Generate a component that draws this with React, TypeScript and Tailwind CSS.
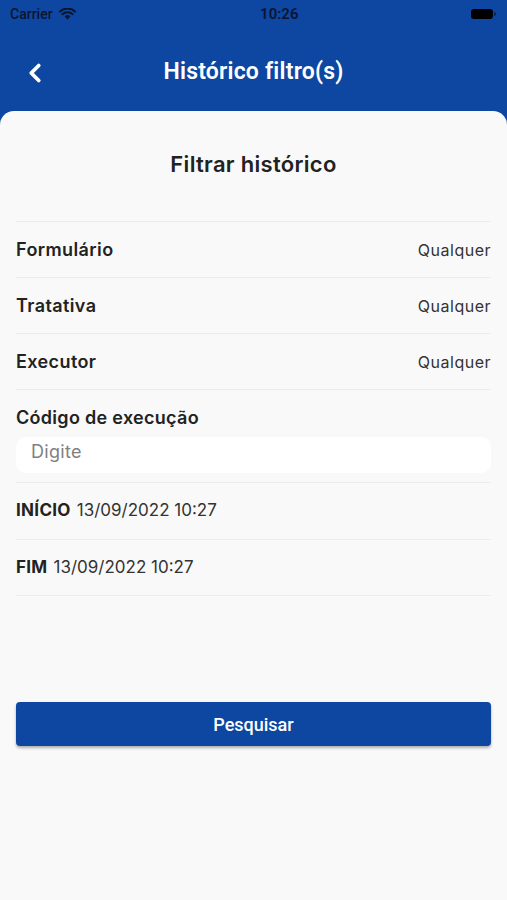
import { ChevronLeft } from "lucide-react";

const rows = ["Formulário", "Tratativa", "Executor"];

const App = () => {
  return (
    <div className="w-[507px] h-[900px] bg-[#0d47a1] flex flex-col font-['Inter',sans-serif] overflow-hidden">
      {/* Status bar */}
      <div className="h-[28px] flex items-center justify-between px-[10px] text-[#0b1430]">
        <div className="flex items-center gap-[6px]">
          <span className="text-[14px] font-medium font-['Roboto',sans-serif]">Carrier</span>
          <svg width="17" height="12" viewBox="0 0 17 12">
            <path d="M8.5 11.5 L5.6 8.4 A4.2 4.2 0 0 1 11.4 8.4 Z" fill="#0b1430" />
            <path d="M3.4 6.2 A7.4 7.4 0 0 1 13.6 6.2" stroke="#0b1430" strokeWidth="2" fill="none" strokeLinecap="round" />
            <path d="M1 3.6 A10.8 10.8 0 0 1 16 3.6" stroke="#0b1430" strokeWidth="2" fill="none" strokeLinecap="round" />
          </svg>
        </div>
        <span className="text-[15px] font-semibold font-['Roboto',sans-serif] ml-[12px]">10:26</span>
        <div className="flex items-center gap-[1px] mr-[1px]">
          <div className="w-[22px] h-[10px] rounded-[3px] bg-black" />
          <div className="w-[2px] h-[4px] rounded-r-sm bg-black/50" />
        </div>
      </div>

      {/* App bar */}
      <div className="h-[83px] flex items-center relative">
        <ChevronLeft className="absolute left-[20px] top-[30px] text-white" size={30} strokeWidth={3} />
        <h1 className="w-full text-center text-white text-[23px] font-semibold font-['Roboto',sans-serif] tracking-[0.2px] mt-[6px]">
          Histórico filtro(s)
        </h1>
      </div>

      {/* Card */}
      <div className="flex-1 bg-[#f9f9f9] rounded-t-[14px] px-[16px]">
        <h2 className="text-center text-[22px] font-semibold text-[#222] pt-[40px] pb-[44px] leading-[26px] tracking-[0.3px]">
          Filtrar histórico
        </h2>
        <div className="border-t border-[#ececec]">
          {rows.map((r) => (
            <div key={r} className="h-[56px] flex items-center justify-between border-b border-[#ececec]">
              <span className="text-[18px] font-semibold text-[#222] tracking-[0.4px]">{r}</span>
              <span className="text-[16px] text-[#333] tracking-[0.5px]">Qualquer</span>
            </div>
          ))}
          <div className="border-b border-[#ececec] pt-[17px] pb-[9px]">
            <div className="text-[18px] font-semibold text-[#222] leading-[22px] tracking-[0.3px]">Código de execução</div>
            <div className="mt-[8px] h-[36px] bg-white rounded-[10px] flex items-center px-[15px] pb-[7px]">
              <span className="text-[18px] text-[#808080] tracking-[0.3px]">Digite</span>
            </div>
          </div>
          <div className="h-[57px] flex items-center gap-[6px] border-b border-[#ececec]">
            <span className="text-[17px] font-bold text-[#222] tracking-[0.3px]">INÍCIO</span>
            <span className="text-[17px] text-[#333]">13/09/2022 10:27</span>
          </div>
          <div className="h-[56px] flex items-center gap-[6px] border-b border-[#ececec]">
            <span className="text-[17px] font-bold text-[#222] tracking-[0.3px]">FIM</span>
            <span className="text-[17px] text-[#333]">13/09/2022 10:27</span>
          </div>
        </div>
        <button className="mt-[106px] w-full h-[44px] bg-[#0d47a1] rounded-[4px] shadow-[0_2px_3px_rgba(0,0,0,0.3)] text-white text-[18px] font-medium font-['Roboto',sans-serif]">
          Pesquisar
        </button>
      </div>
    </div>
  );
};

export default App;
